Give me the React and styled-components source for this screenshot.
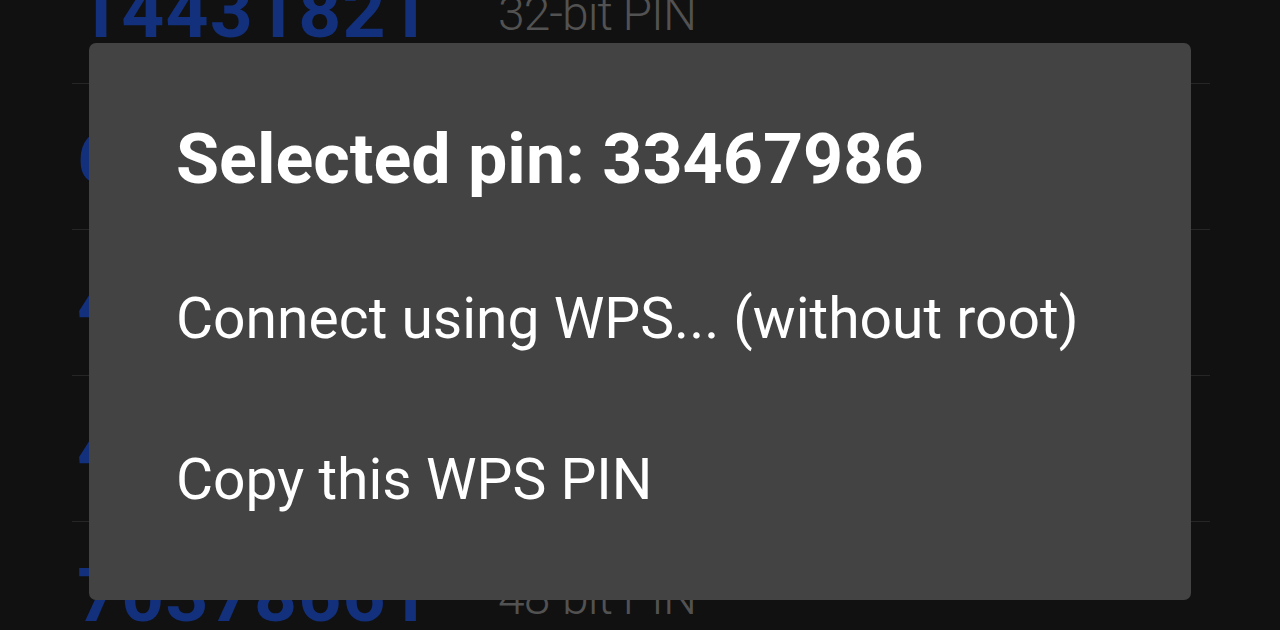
import styled, { createGlobalStyle } from 'styled-components'

const GlobalStyle = createGlobalStyle`
  html, body {
    margin: 0;
    padding: 0;
    background: #111111;
    font-family: Roboto, "Liberation Sans", sans-serif;
  }
`

const Screen = styled.div`
  position: relative;
  width: 1280px;
  height: 630px;
  overflow: hidden;
  background: #111111;
`

const PinList = styled.div`
  display: flex;
  flex-direction: column;
  margin-top: -62px;
  padding: 0 70px 0 72px;
`

const PinRow = styled.div`
  height: 145px;
  display: flex;
  align-items: center;
  border-bottom: 1px solid #262626;
`

const PinNumber = styled.div`
  width: 421px;
  padding-left: 5px;
  font-size: 75px;
  font-weight: 700;
  color: #13307c;
  letter-spacing: 1.2px;
`

const PinType = styled.div`
  font-size: 48px;
  font-weight: 300;
  color: #525252;
  padding-top: 6px;
  letter-spacing: -1px;
`

const Dialog = styled.div`
  position: absolute;
  left: 89px;
  top: 43px;
  width: 1102px;
  height: 557px;
  background: #434343;
  border-radius: 7px;
  box-sizing: border-box;
  padding: 76px 0 0 87px;
  display: flex;
  flex-direction: column;
`

const Title = styled.div`
  font-size: 70px;
  font-weight: 700;
  color: #ffffff;
  line-height: 80px;
  margin-bottom: 88px;
`

const Option = styled.div`
  font-size: 57px;
  color: #ffffff;
  line-height: 64px;
  height: 170px;

  & + & {
    margin-top: 8px;
  }
`

const pins = [
  { number: '14431821', type: '32-bit PIN' },
  { number: '62478913', type: '28-bit PIN' },
  { number: '45678123', type: '24-bit PIN' },
  { number: '41238876', type: '36-bit PIN' },
  { number: '70378661', type: '48-bit PIN' },
]

export default function App() {
  return (
    <Screen>
      <GlobalStyle />
      <PinList>
        {pins.map((p) => (
          <PinRow key={p.number}>
            <PinNumber>{p.number}</PinNumber>
            <PinType>{p.type}</PinType>
          </PinRow>
        ))}
      </PinList>
      <Dialog>
        <Title>Selected pin: 33467986</Title>
        <Option>Connect using WPS... (without root)</Option>
        <Option>Copy this WPS PIN</Option>
      </Dialog>
    </Screen>
  )
}
